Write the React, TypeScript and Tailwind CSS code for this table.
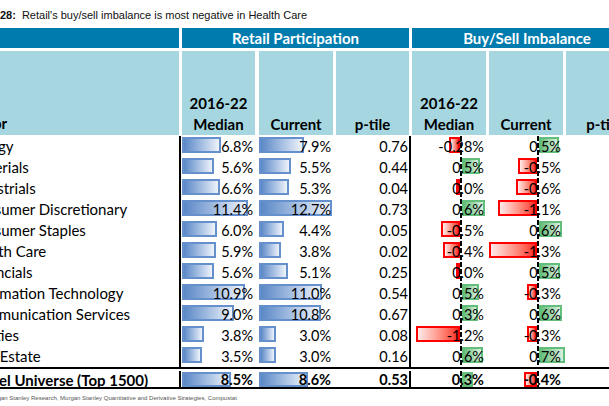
import React from "react";

type Row = {
  name: string;
  m: number;
  c: number;
  p: string;
  bm: string;
  bmw: number;
  bc: string;
  bcw: number;
};

const rows: Row[] = [
  { name: "Energy", m: 6.8, c: 7.9, p: "0.76", bm: "-0.28%", bmw: -11, bc: "0.5%", bcw: 20 },
  { name: "Materials", m: 5.6, c: 5.5, p: "0.44", bm: "0.5%", bmw: 18, bc: "-0.5%", bcw: -19 },
  { name: "Industrials", m: 6.6, c: 5.3, p: "0.04", bm: "0.0%", bmw: -3, bc: "-0.6%", bcw: -21 },
  { name: "Consumer Discretionary", m: 11.4, c: 12.7, p: "0.73", bm: "0.6%", bmw: 23, bc: "-1.1%", bcw: -39 },
  { name: "Consumer Staples", m: 6.0, c: 4.4, p: "0.05", bm: "-0.5%", bmw: -19, bc: "0.6%", bcw: 23 },
  { name: "Health Care", m: 5.9, c: 3.8, p: "0.02", bm: "-0.4%", bmw: -17, bc: "-1.3%", bcw: -48 },
  { name: "Financials", m: 5.6, c: 5.1, p: "0.25", bm: "0.0%", bmw: -2, bc: "0.5%", bcw: 21 },
  { name: "Information Technology", m: 10.9, c: 11.0, p: "0.54", bm: "0.5%", bmw: 17, bc: "-0.3%", bcw: -10 },
  { name: "Communication Services", m: 9.0, c: 10.8, p: "0.67", bm: "0.3%", bmw: 16, bc: "0.6%", bcw: 23 },
  { name: "Utilities", m: 3.8, c: 3.0, p: "0.08", bm: "-1.2%", bmw: -44, bc: "-0.3%", bcw: -10 },
  { name: "Real Estate", m: 3.5, c: 3.0, p: "0.16", bm: "0.6%", bmw: 21, bc: "0.7%", bcw: 26 },
];

const total: Row = {
  name: "Model Universe (Top 1500)",
  m: 8.5,
  c: 8.6,
  p: "0.53",
  bm: "0.3%",
  bmw: 11,
  bc: "-0.4%",
  bcw: -13,
};

const SCALE = 5.75;

function BlueCell({ v, wide, barH }: { v: number; wide?: boolean; barH: string }) {
  return (
    <div className={`relative h-full shrink-0 pt-[1px] ${wide ? "w-[74px]" : "w-[73px]"}`}>
      <div
        className={`${barH} border-2 border-[#6590cb] bg-linear-to-r from-[#5b88c6] to-[#eef3fa]`}
        style={{ width: Math.round(v * SCALE) }}
      />
      <div className="absolute inset-0 flex items-center justify-end pr-[2px]">{v.toFixed(1)}%</div>
    </div>
  );
}

function ImbCell({ text, w, barH }: { text: string; w: number; barH: string }) {
  return (
    <div className="relative flex h-full w-[74px] shrink-0">
      <div className="flex w-[48px] shrink-0 justify-end pt-[1px]">
        {w < 0 && (
          <div
            className={`${barH} border-2 border-[#ff0000] bg-linear-to-r from-[#ffeaea] to-[#ff1f1f]`}
            style={{ width: -w }}
          />
        )}
      </div>
      <div className="h-full w-[2px] shrink-0 bg-[repeating-linear-gradient(to_bottom,#000_0px,#000_5px,transparent_5px,transparent_7px)]" />
      <div className="flex-1 pt-[1px]">
        {w > 0 && (
          <div
            className={`${barH} border-2 border-[#63be7b] bg-linear-to-r from-[#63be7b] to-[#d9f0df]`}
            style={{ width: w }}
          />
        )}
      </div>
      <div className="absolute inset-0 flex items-center justify-end pr-[2px]">{text}</div>
    </div>
  );
}

function DataRow({ r, h, barH }: { r: Row; h: string; barH: string }) {
  return (
    <div className={`flex ${h}`}>
      <div className="flex w-[179px] shrink-0 items-center overflow-hidden whitespace-nowrap">
        <span className="ml-[-32px] text-[15px]">{r.name}</span>
      </div>
      <div className="flex w-[3px] shrink-0">
        <div className="h-full w-[2px] bg-black" />
      </div>
      <BlueCell v={r.m} barH={barH} />
      <div className="w-[4px] shrink-0" />
      <BlueCell v={r.c} wide barH={barH} />
      <div className="w-[3px] shrink-0" />
      <div className="flex w-[73px] shrink-0 items-center justify-end pr-[1px]">{r.p}</div>
      <div className="flex w-[3px] shrink-0">
        <div className="h-full w-[2px] bg-black" />
      </div>
      <ImbCell text={r.bm} w={r.bmw} barH={barH} />
      <div className="w-[3px] shrink-0" />
      <ImbCell text={r.bc} w={r.bcw} barH={barH} />
      <div className="w-[3px] shrink-0" />
      <div className="w-[76px] shrink-0" />
    </div>
  );
}

export default function App() {
  return (
    <div className="h-[406px] w-[609px] overflow-hidden bg-white font-['Lato',sans-serif] text-[14.5px] text-black">
      <div className="flex h-[28px] items-center whitespace-nowrap pt-[2px] font-['Liberation_Sans',Arial,sans-serif] text-[11px] text-[#111]">
        <span className="font-bold">28:</span>
        <span className="ml-[6px]">Retail's buy/sell imbalance is most negative in Health Care</span>
      </div>

      <div className="flex h-[20px] w-[642px] whitespace-nowrap text-[15px] font-bold text-white">
        <div className="w-[179px] shrink-0 bg-[#007bad]" />
        <div className="w-[3px] shrink-0" />
        <div className="flex w-[227px] shrink-0 items-center justify-center bg-[#007bad]">Retail Participation</div>
        <div className="w-[3px] shrink-0" />
        <div className="flex w-[230px] shrink-0 items-center justify-center bg-[#007bad]">Buy/Sell Imbalance</div>
      </div>

      <div className="mt-[3px] flex h-[84px] w-[642px] text-[15px] font-bold leading-[21px]">
        <div className="flex w-[179px] shrink-0 items-end overflow-hidden whitespace-nowrap bg-[#a6d7e1] pb-[1px]">
          <span className="ml-[-36px]">Sector</span>
        </div>
        <div className="w-[3px] shrink-0" />
        <div className="flex w-[73px] shrink-0 flex-col items-center justify-end bg-[#a6d7e1]">
          <span>2016-22</span>
          <span>Median</span>
        </div>
        <div className="w-[4px] shrink-0" />
        <div className="flex w-[74px] shrink-0 flex-col items-center justify-end bg-[#a6d7e1]">
          <span>Current</span>
        </div>
        <div className="w-[3px] shrink-0" />
        <div className="flex w-[73px] shrink-0 flex-col items-center justify-end bg-[#a6d7e1]">
          <span>p-tile</span>
        </div>
        <div className="w-[3px] shrink-0" />
        <div className="flex w-[74px] shrink-0 flex-col items-center justify-end bg-[#a6d7e1]">
          <span>2016-22</span>
          <span>Median</span>
        </div>
        <div className="w-[3px] shrink-0" />
        <div className="flex w-[74px] shrink-0 flex-col items-center justify-end bg-[#a6d7e1]">
          <span>Current</span>
        </div>
        <div className="w-[3px] shrink-0" />
        <div className="flex w-[76px] shrink-0 flex-col items-center justify-end bg-[#a6d7e1]">
          <span>p-tile</span>
        </div>
      </div>

      <div className="mt-[1px] w-[642px]">
        {rows.map((r) => (
          <DataRow key={r.name} r={r} h="h-[21px]" barH="h-[16px]" />
        ))}
        <div className="h-[22px] border-y-2 border-black pt-[2px] font-bold">
          <DataRow r={total} h="h-[18px]" barH="h-[15px]" />
        </div>
      </div>

      <div className="mt-[5px] overflow-hidden whitespace-nowrap font-['Liberation_Sans',Arial,sans-serif] text-[6px] text-[#555]">
        <span className="ml-[-35px]">
          Source: Morgan Stanley Research, Morgan Stanley Quantitative and Derivative Strategies, Compustat
        </span>
      </div>
    </div>
  );
}
